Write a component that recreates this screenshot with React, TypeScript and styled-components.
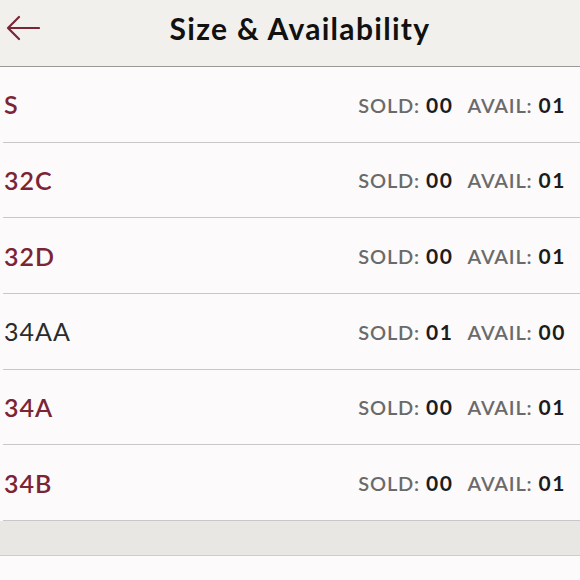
import React from 'react';
import styled, { createGlobalStyle } from 'styled-components';

const GlobalStyle = createGlobalStyle`
  html, body {
    margin: 0;
    padding: 0;
    background: #fcfafa;
    font-family: Lato, "Open Sans", sans-serif;
  }
`;

const Page = styled.div`
  width: 580px;
  height: 580px;
  overflow: hidden;
  display: flex;
  flex-direction: column;
  background: #fcfafa;
`;

const Header = styled.header`
  height: 67px;
  box-sizing: border-box;
  flex-shrink: 0;
  background: #f2f0ec;
  border-bottom: 1px solid #9a9895;
  display: grid;
  grid-template-columns: 60px 1fr 40px;
  align-items: center;
  padding-bottom: 11px;
`;

const BackButton = styled.button`
  border: none;
  background: none;
  padding: 0 0 0 6px;
  display: flex;
  align-items: center;
  cursor: pointer;
`;

const Title = styled.h1`
  margin: 0;
  text-align: center;
  font-size: 30px;
  font-weight: 700;
  color: #111;
  letter-spacing: 1.3px;
`;

const List = styled.ul`
  list-style: none;
  margin: 0;
  padding: 0;
`;

const Row = styled.li`
  height: 74.67px;
  margin-left: 3px;
  border-bottom: 1px solid #c9c7c7;
  display: flex;
  align-items: center;
  justify-content: space-between;
  padding: 0 14px 0 1px;
`;

const SizeLabel = styled.span<{ $inStock: boolean }>`
  font-size: 25px;
  letter-spacing: 1px;
  font-weight: ${(p) => (p.$inStock ? 600 : 400)};
  color: ${(p) => (p.$inStock ? '#7b2437' : '#2b2b2b')};
`;

const Counts = styled.div`
  display: flex;
  gap: 14px;
  font-size: 20px;
  letter-spacing: 0.8px;
`;

const Count = styled.span`
  color: #6a6a6a;
  font-weight: 600;
`;

const Value = styled.span`
  color: #1c1c1c;
  font-weight: 700;
  font-size: 21px;
  letter-spacing: 1.6px;
  margin-left: 6px;
`;

const Band = styled.div`
  height: 34px;
  flex-shrink: 0;
  background: #e9e7e3;
  border-bottom: 1px solid #cfcdca;
`;

const sizes = [
  { name: 'S', sold: '00', avail: '01' },
  { name: '32C', sold: '00', avail: '01' },
  { name: '32D', sold: '00', avail: '01' },
  { name: '34AA', sold: '01', avail: '00' },
  { name: '34A', sold: '00', avail: '01' },
  { name: '34B', sold: '00', avail: '01' },
];

const App: React.FC = () => (
  <>
    <GlobalStyle />
    <Page>
      <Header>
        <BackButton aria-label="Back">
          <svg width="34" height="26" viewBox="0 0 34 26" fill="none">
            <path d="M33 13H2M13 2L2 13l11 11" stroke="#7a2535" strokeWidth="2.2" strokeLinecap="round" strokeLinejoin="round" />
          </svg>
        </BackButton>
        <Title>Size &amp; Availability</Title>
        <div />
      </Header>
      <List>
        {sizes.map((s) => (
          <Row key={s.name}>
            <SizeLabel $inStock={s.avail !== '00'}>{s.name}</SizeLabel>
            <Counts>
              <Count>
                SOLD:<Value>{s.sold}</Value>
              </Count>
              <Count>
                AVAIL:<Value>{s.avail}</Value>
              </Count>
            </Counts>
          </Row>
        ))}
      </List>
      <Band />
    </Page>
  </>
);

export default App;
